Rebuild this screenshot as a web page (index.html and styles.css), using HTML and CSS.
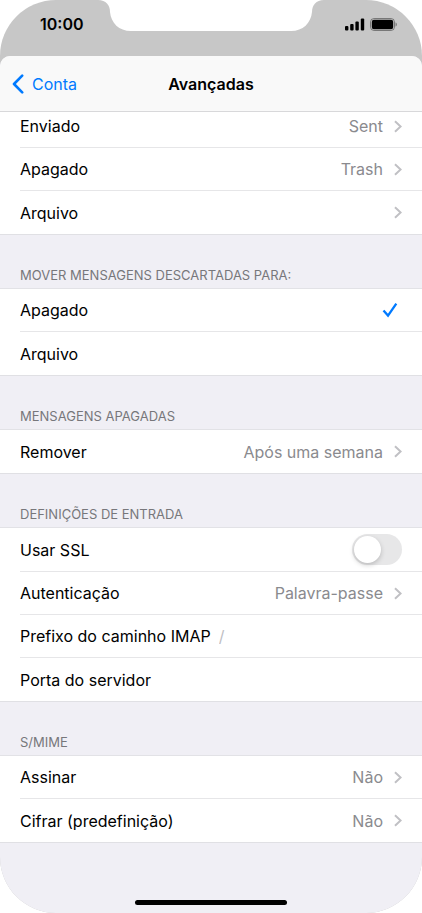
FILE: index.html
```html
<!DOCTYPE html>
<html lang="pt">
<head>
    <meta charset="UTF-8">
    <meta name="viewport" content="width=device-width, initial-scale=1.0">
    <title>Avançadas</title>
    <link rel="stylesheet" href="styles.css">
</head>
<body>

    <!-- shared icons -->
    <svg class="icon-defs" aria-hidden="true">
        <symbol id="chevron" viewBox="0 0 8 13">
            <path d="M1 1.2 L6.6 6.5 L1 11.8" fill="none" stroke="currentColor" stroke-width="2"/>
        </symbol>
        <symbol id="check" viewBox="0 0 16 16">
            <path d="M1.5 8.6 L6 13.6 L14.3 1.6" fill="none" stroke="currentColor" stroke-width="2.3"/>
        </symbol>
    </svg>

    <div class="phone">
        <header class="status-bar">
            <time class="clock">10:00</time>
            <svg class="notch" width="226" height="32" viewBox="0 0 226 32" aria-hidden="true">
                <path d="M0 0 C8 0 12 5 12 12 C13 23 21 31 33 31 H193 C205 31 213 23 214 12 C214 5 218 0 226 0 Z" fill="#fff"/>
            </svg>
            <div class="status-icons">
                <svg width="20" height="13" viewBox="0 0 20 13" aria-hidden="true">
                    <rect x="0" y="8" width="3.4" height="4.5" rx="1"/>
                    <rect x="5.2" y="6" width="3.4" height="6.5" rx="1"/>
                    <rect x="10.4" y="3.4" width="3.4" height="9.1" rx="1"/>
                    <rect x="15.8" y="0.5" width="3.4" height="12" rx="1"/>
                </svg>
                <svg width="27" height="13" viewBox="0 0 27 13" aria-hidden="true">
                    <rect x="0.5" y="0.5" width="24" height="12" rx="3.6" fill="none" stroke="#000" stroke-opacity="0.4"/>
                    <rect x="1.8" y="1.8" width="21.4" height="9.4" rx="2.2"/>
                    <path d="M25.6 4.5 C27.1 5.2 27.1 7.8 25.6 8.5 Z" fill-opacity="0.5"/>
                </svg>
            </div>
        </header>

        <div class="sheet">
            <nav class="nav-bar">
                <a href="#" class="back-link">
                    <svg width="12" height="20" viewBox="0 0 12 20" aria-hidden="true">
                        <path d="M10.2 1.6 L2 10 L10.2 18.4" fill="none" stroke="currentColor" stroke-width="2.6" stroke-linecap="round" stroke-linejoin="round"/>
                    </svg>
                    Conta
                </a>
                <h1>Avançadas</h1>
            </nav>

            <main class="settings">
                <div class="group">
                    <a href="#" class="row">Enviado <span class="value">Sent</span><svg class="chevron"><use href="#chevron"/></svg></a>
                    <a href="#" class="row">Apagado <span class="value">Trash</span><svg class="chevron"><use href="#chevron"/></svg></a>
                    <a href="#" class="row">Arquivo <span class="value"></span><svg class="chevron"><use href="#chevron"/></svg></a>
                </div>

                <h2>Mover mensagens descartadas para:</h2>
                <div class="group">
                    <label class="row">Apagado
                        <input type="radio" name="discard" class="pick" checked>
                        <svg class="check"><use href="#check"/></svg>
                    </label>
                    <label class="row">Arquivo
                        <input type="radio" name="discard" class="pick">
                        <svg class="check"><use href="#check"/></svg>
                    </label>
                </div>

                <h2>Mensagens apagadas</h2>
                <div class="group">
                    <a href="#" class="row">Remover <span class="value">Após uma semana</span><svg class="chevron"><use href="#chevron"/></svg></a>
                </div>

                <h2>Definições de entrada</h2>
                <div class="group">
                    <div class="row switch-row">
                        <label for="ssl">Usar SSL</label>
                        <input type="checkbox" id="ssl" class="switch">
                    </div>
                    <a href="#" class="row">Autenticação <span class="value">Palavra-passe</span><svg class="chevron"><use href="#chevron"/></svg></a>
                    <div class="row">
                        <label for="prefix">Prefixo do caminho IMAP</label>
                        <input type="text" id="prefix" class="field" placeholder="/">
                    </div>
                    <div class="row">
                        <label for="port">Porta do servidor</label>
                        <input type="text" id="port" class="field">
                    </div>
                </div>

                <h2>S/MIME</h2>
                <div class="group">
                    <a href="#" class="row">Assinar <span class="value">Não</span><svg class="chevron"><use href="#chevron"/></svg></a>
                    <a href="#" class="row">Cifrar (predefinição) <span class="value">Não</span><svg class="chevron"><use href="#chevron"/></svg></a>
                </div>
            </main>

            <div class="home-bar"></div>
        </div>
    </div>

</body>
</html>
```

FILE: styles.css
```css
* {
    box-sizing: border-box;
}

body {
    margin: 0;
    background-color: #fff;
    color: #000;
    font-family: Inter, "Liberation Sans", sans-serif;
    font-size: 16px;
    line-height: 20px;
}

a {
    color: inherit;
    text-decoration: none;
}

.icon-defs {
    position: absolute;
    width: 0;
    height: 0;
}

.phone {
    display: flex;
    flex-direction: column;
    min-height: 100vh;
    background-color: #c7c7c7;
    border-radius: 56px;
    overflow: hidden;
}

/* status bar */
.status-bar {
    position: relative;
    display: flex;
    justify-content: space-between;
    height: 56px;
    padding: 14px 25px 0 40px;
}

.clock {
    font-weight: 600;
}

.notch {
    position: absolute;
    top: 0;
    left: 50%;
    transform: translateX(-50%);
}

.status-icons {
    display: flex;
    align-items: center;
    gap: 5px;
    height: 20px;
}

/* sheet */
.sheet {
    flex: 1;
    display: flex;
    flex-direction: column;
    background-color: #f0eff5;
    border-radius: 10px 10px 0 0;
    overflow: hidden;
}

.nav-bar {
    position: relative;
    z-index: 1;
    display: grid;
    grid-template-columns: 1fr auto 1fr;
    align-items: center;
    height: 56px;
    padding: 0 12px;
    background-color: #f9f9f9;
    border-bottom: 1px solid #d8d8da;
}

.nav-bar h1 {
    grid-column: 2;
    margin: 0;
    font-size: 16px;
    font-weight: 600;
}

.back-link {
    display: flex;
    align-items: center;
    gap: 8px;
    color: #007aff;
}

/* the list is scrolled a little way under the nav bar */
.settings {
    margin-top: -7px;
}

.settings h2 {
    height: 54px;
    margin: 0;
    padding: 31px 20px 0;
    border-bottom: 1px solid #e2e2e6;
    color: #77777b;
    font-size: 13px;
    font-weight: 400;
    line-height: 18px;
    text-transform: uppercase;
}

.group {
    padding-left: 20px;
    background-color: #fff;
    border-bottom: 1px solid #e0e0e4;
}

.row {
    display: flex;
    align-items: center;
    min-height: 43px;
    padding-right: 20px;
    border-bottom: 1px solid #e6e6e8;
}

.row:last-child {
    border-bottom: none;
}

.value {
    flex: 1;
    color: #8a8a8e;
    text-align: right;
}

.chevron {
    width: 8px;
    height: 13px;
    margin-left: 11px;
    color: #c0c0c4;
}

.pick {
    appearance: none;
    flex: 1;
    margin: 0;
}

.check {
    display: none;
    width: 16px;
    height: 16px;
    margin-right: 4px;
    color: #007aff;
}

.pick:checked + .check {
    display: block;
}

.switch-row {
    justify-content: space-between;
    min-height: 44px;
}

.switch {
    appearance: none;
    width: 50px;
    height: 31px;
    margin: 0;
    padding: 2px;
    border-radius: 16px;
    background-color: #e7e7e8;
}

.switch::before {
    content: "";
    display: block;
    width: 27px;
    height: 27px;
    border-radius: 50%;
    background-color: #fff;
    box-shadow: 0 2px 5px rgba(0, 0, 0, 0.2);
}

.switch:checked {
    background-color: #34c759;
}

.switch:checked::before {
    margin-left: 19px;
}

.field {
    flex: 1;
    min-width: 0;
    margin-left: 8px;
    padding: 0;
    border: none;
    outline: none;
    background: none;
    font: inherit;
}

.field::placeholder {
    color: #c0c0c4;
}

.home-bar {
    width: 36%;
    height: 5px;
    margin: auto auto 8px;
    border-radius: 3px;
    background-color: #000;
}
```
